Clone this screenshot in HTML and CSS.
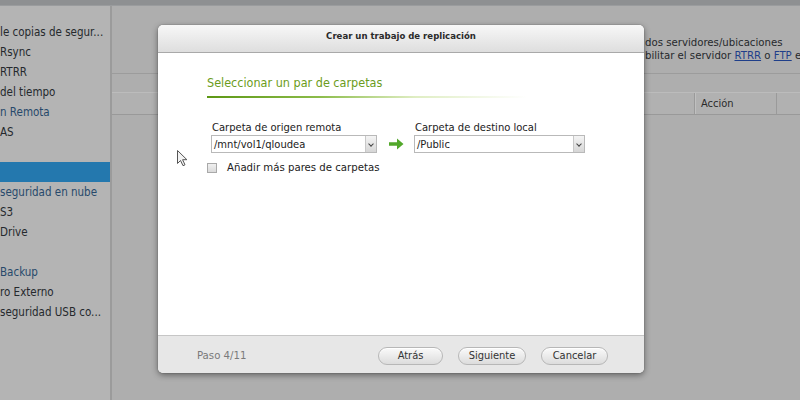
FILE: index.html
```html
<!DOCTYPE html>
<html lang="es">
<head>
<meta charset="utf-8">
<title>Crear un trabajo de replicación</title>
<link rel="stylesheet" href="styles.css">
</head>
<body>
<div class="topbar"></div>
<div class="app">
  <aside class="sidebar">
    <div class="item">le copias de segur...</div>
    <div class="item">Rsync</div>
    <div class="item">RTRR</div>
    <div class="item">del tiempo</div>
    <div class="item head">n Remota</div>
    <div class="item">AS</div>
    <div class="item"></div>
    <div class="item selected"></div>
    <div class="item head">seguridad en nube</div>
    <div class="item">S3</div>
    <div class="item">Drive</div>
    <div class="item"></div>
    <div class="item head">Backup</div>
    <div class="item">ro Externo</div>
    <div class="item">seguridad USB co...</div>
  </aside>
  <main class="main">
    <div class="intro">
      <p>dos servidores/ubicaciones</p>
      <p>bilitar el servidor <a href="#">RTRR</a> o <a href="#">FTP</a> e</p>
    </div>
    <div class="rule"></div>
    <div class="table-head">
      <div class="col c1"></div>
      <div class="col c2">Acción</div>
      <div class="col c3"></div>
    </div>
  </main>
</div>

<div class="dialog">
  <div class="dlg-header">Crear un trabajo de replicación</div>
  <div class="dlg-body">
    <h2 class="section-title">Seleccionar un par de carpetas</h2>
    <div class="section-line"></div>
    <div class="pair">
      <div class="field src">
        <label>Carpeta de origen remota</label>
        <div class="select"><span>/mnt/vol1/qloudea</span><i class="caret"></i></div>
      </div>
      <svg class="arrow" width="15" height="12" viewBox="0 0 15 12"><path d="M0 4.2h8V0.5L14.5 6 8 11.5V7.8H0z" fill="#52a82a"/></svg>
      <div class="field dst">
        <label>Carpeta de destino local</label>
        <div class="select"><span>/Public</span><i class="caret"></i></div>
      </div>
    </div>
    <div class="check-row"><span class="box"></span><span>Añadir más pares de carpetas</span></div>
  </div>
  <div class="dlg-footer">
    <span class="step">Paso 4/11</span>
    <div class="buttons">
      <button class="btn b1">Atrás</button>
      <button class="btn b2">Siguiente</button>
      <button class="btn b3">Cancelar</button>
    </div>
  </div>
</div>

<svg class="cursor" width="12" height="17" viewBox="0 0 12 17"><path d="M0.5 0.5v13l3-3 2.5 5.2 2-0.9-2.4-5.1h4.3z" fill="#f2f2f2" stroke="#555" stroke-width="1"/></svg>
</body>
</html>
```

FILE: styles.css
```css
* { box-sizing: border-box; }
html, body { margin: 0; padding: 0; }
body {
  width: 800px;
  height: 400px;
  overflow: hidden;
  background: #adadad;
  font-family: "DejaVu Sans", Verdana, sans-serif;
  font-stretch: condensed;
  color: #2b2f33;
}
.topbar {
  height: 6px;
  background: #8e9092;
  border-bottom: 1px solid #9a9c9e;
}
.app {
  display: flex;
  height: 394px;
}
.sidebar {
  width: 112px;
  background: #b4b4b4;
  border-right: 2px solid #9b9b9b;
  padding-top: 16px;
  flex-shrink: 0;
}
.item {
  height: 20px;
  line-height: 20px;
  font-size: 11.5px;
  white-space: nowrap;
  overflow: hidden;
  color: #25292d;
}
.item.head { color: #27496b; }
.item.selected { background: #2478ae; }
.main {
  flex: 1;
  min-width: 0;
  padding-top: 30px;
  background: #aeaeae;
}
.intro {
  padding-left: 533px;
  font-size: 11.3px;
  line-height: 13px;
  color: #26292c;
  white-space: nowrap;
  overflow: hidden;
}
.intro p { margin: 0; }
.intro a { color: #1f3f8a; text-decoration: underline; }
.rule {
  margin-top: 11px;
  height: 1px;
  background: #bdbdbd;
  border-bottom: 1px solid #9c9c9c;
}
.table-head {
  margin-top: 18px;
  height: 23px;
  display: flex;
  background: #b1b1b1;
  border-top: 1px solid #bcbcbc;
  border-bottom: 1px solid #999;
}
.col { height: 100%; font-size: 11px; line-height: 22px; color: #2a2a2a; }
.c1 { width: 583px; border-right: 1px solid #9a9a9a; }
.c2 { width: 82px; padding-left: 5px; border-right: 1px solid #9a9a9a; border-left: 1px solid #c0c0c0; }
.c3 { flex: 1; }

.dialog {
  position: absolute;
  left: 158px;
  top: 25px;
  width: 486px;
  height: 348px;
  background: #fff;
  border-radius: 5px;
  box-shadow: 0 2px 6px rgba(0,0,0,0.45), 0 0 1px rgba(0,0,0,0.6);
  display: flex;
  flex-direction: column;
  overflow: hidden;
}
.dlg-header {
  height: 28px;
  background: linear-gradient(#f7f7f7, #dedede);
  border-bottom: 1px solid #a9a9a9;
  text-align: center;
  font-size: 9.5px;
  font-weight: bold;
  line-height: 21px;
  color: #2a2a2a;
}
.dlg-body {
  flex: 1;
  padding: 22px 0 0 49px;
}
.section-title {
  margin: 0;
  font-size: 12.5px;
  line-height: 16px;
  font-weight: normal;
  color: #6b9c20;
}
.section-line {
  margin-top: 5px;
  width: 320px;
  height: 2px;
  background: linear-gradient(90deg, #5c9714 0%, #8cbc4a 35%, rgba(210,230,170,0.7) 65%, rgba(255,255,255,0) 100%);
}
.pair {
  display: flex;
  align-items: flex-end;
  margin: 23px 0 0 4px;
}
.field { display: flex; flex-direction: column; }
.field label {
  font-size: 11.1px;
  line-height: 14px;
  color: #222;
  padding-left: 1px;
}
.src { width: 166px; }
.dst { width: 171px; }
.select {
  height: 18px;
  border: 1px solid #b9b9b9;
  background: #fff;
  display: flex;
  align-items: center;
  font-size: 11.1px;
  color: #222;
}
.select span { flex: 1; padding-left: 2px; }
.caret {
  width: 11px;
  height: 16px;
  background: linear-gradient(#f4f4f4, #d6d6d6);
  border-left: 1px solid #c8c8c8;
  position: relative;
}
.caret::after {
  content: "";
  position: absolute;
  left: 3px;
  top: 6px;
  width: 3px;
  height: 3px;
  border-right: 1.5px solid #444;
  border-bottom: 1.5px solid #444;
  transform: rotate(45deg);
}
.arrow { margin: 0 10px 3px 12px; }
.check-row {
  display: flex;
  align-items: center;
  margin-top: 8px;
  font-size: 11.3px;
  color: #222;
}
.box {
  width: 10px;
  height: 10px;
  border: 1px solid #a9a9a9;
  background: linear-gradient(#f0f0f0, #dadada);
  margin-right: 10px;
}
.dlg-footer {
  height: 38px;
  background: #e7e7e7;
  border-top: 1px solid #c6c6c6;
  display: flex;
  align-items: center;
  justify-content: space-between;
  padding: 2px 36px 0 39px;
}
.step { font-size: 11.3px; color: #7a7a7a; }
.buttons { display: flex; gap: 15px; }
.btn {
  height: 18px;
  border: 1px solid #b7b7b7;
  border-radius: 9px;
  background: linear-gradient(#fafafa, #dcdcdc);
  font-family: inherit;
  font-stretch: condensed;
  font-size: 11px;
  color: #333;
  padding: 0;
  box-shadow: inset 0 1px 0 #fff;
}
.b1 { width: 65px; }
.b2 { width: 68px; }
.b3 { width: 67px; }
.cursor {
  position: absolute;
  left: 177px;
  top: 150px;
}
```
